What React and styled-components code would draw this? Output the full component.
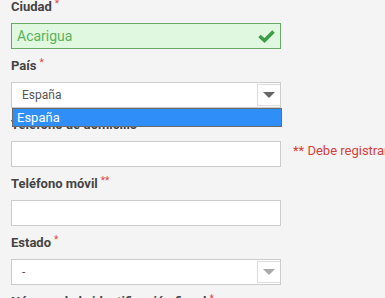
import styled, { createGlobalStyle } from 'styled-components'

const GlobalStyle = createGlobalStyle`
    body {
        margin: 0;
        background: #f4f4f4;
        font-family: Roboto, "Liberation Sans", Arial, sans-serif;
        overflow: hidden;
    }
`
const Form = styled.div`
    display: flex;
    flex-direction: column;
    padding-left: 11px;
`
const Field = styled.div`
    margin-bottom: 10px;
`
const Label = styled.label`
    display: block;
    font-size: 13px;
    line-height: 14px;
    font-weight: 700;
    color: #444;
    margin-bottom: 9px;
    white-space: nowrap;
`
const Req = styled.span`
    position: relative;
    top: -4px;
    margin-left: 3px;
    font-size: 10px;
    line-height: 0;
    font-weight: 400;
    color: #e0464b;
`
const Row = styled.div`
    display: flex;
    align-items: flex-start;
`
const Input = styled.div`
    position: relative;
    flex-shrink: 0;
    box-sizing: border-box;
    width: 270px;
    height: 26px;
    padding: 0 5px;
    display: flex;
    align-items: center;
    border: 1px solid ${p => (p.$valid ? '#6aa86a' : '#ccc')};
    background: ${p => (p.$valid ? '#dff8df' : '#fff')};
    color: ${p => (p.$valid ? '#5cb25c' : '#555')};
    font-size: 14px;
`
const Check = styled.svg`
    position: absolute;
    right: 5px;
    top: 5px;
`
const Message = styled.div`
    margin-left: 12px;
    padding-top: 2px;
    font-size: 13px;
    line-height: 15px;
    color: #d43f3a;
    white-space: nowrap;
`
const SelectBox = styled.div`
    position: relative;
    box-sizing: border-box;
    width: 270px;
    height: 26px;
    display: flex;
    border: 1px solid #ccc;
    background: #fff;
`
const Value = styled.div`
    flex: 1;
    display: flex;
    align-items: center;
    padding-left: 10px;
    font-size: 12px;
    color: #555;
`
const ArrowBtn = styled.div`
    box-sizing: border-box;
    width: 23px;
    margin: 1px 0;
    border: 1px solid #ddd;
    border-right: none;
    display: flex;
    align-items: center;
    justify-content: center;
    &::after {
        content: '';
        border-left: 6px solid transparent;
        border-right: 6px solid transparent;
        border-top: 6px solid ${p => (p.$muted ? '#aaa' : '#666')};
    }
`
const Options = styled.div`
    position: absolute;
    z-index: 2;
    top: 25px;
    left: 0;
    box-sizing: border-box;
    width: 270px;
    height: 19px;
    border: 1px solid #6b6b6b;
    background: #fff;
    display: flex;
    flex-direction: column;
`
const Option = styled.div`
    flex: 1;
    display: flex;
    align-items: center;
    padding-left: 4px;
    font-size: 13px;
    color: ${p => (p.$active ? '#fff' : '#333')};
    background: ${p => (p.$active ? '#2f8ef7' : '#fff')};
`

const App = () => {
    return (
        <>
            <GlobalStyle />
            <Form>
                <Field>
                    <Label>Ciudad<Req>*</Req></Label>
                    <Input $valid>
                        Acarigua
                        <Check width="17" height="14" viewBox="0 0 17 14">
                            <path d="M1.5 7 L6.5 11.5 L15.5 2.5" fill="none" stroke="#3f9c4a" strokeWidth="3.6" />
                        </Check>
                    </Input>
                </Field>
                <Field>
                    <Label>País<Req>*</Req></Label>
                    <SelectBox>
                        <Value>España</Value>
                        <ArrowBtn />
                        <Options>
                            <Option $active>España</Option>
                        </Options>
                    </SelectBox>
                </Field>
                <Field>
                    <Label>Teléfono de domicilio</Label>
                    <Row>
                        <Input />
                        <Message>** Debe registrar al menos un teléfono</Message>
                    </Row>
                </Field>
                <Field>
                    <Label>Teléfono móvil<Req>**</Req></Label>
                    <Input />
                </Field>
                <Field>
                    <Label>Estado<Req>*</Req></Label>
                    <SelectBox>
                        <Value>-</Value>
                        <ArrowBtn $muted />
                    </SelectBox>
                </Field>
                <Field>
                    <Label>Número de la identificación fiscal<Req>*</Req></Label>
                    <Input />
                </Field>
            </Form>
        </>
    )
}

export default App
